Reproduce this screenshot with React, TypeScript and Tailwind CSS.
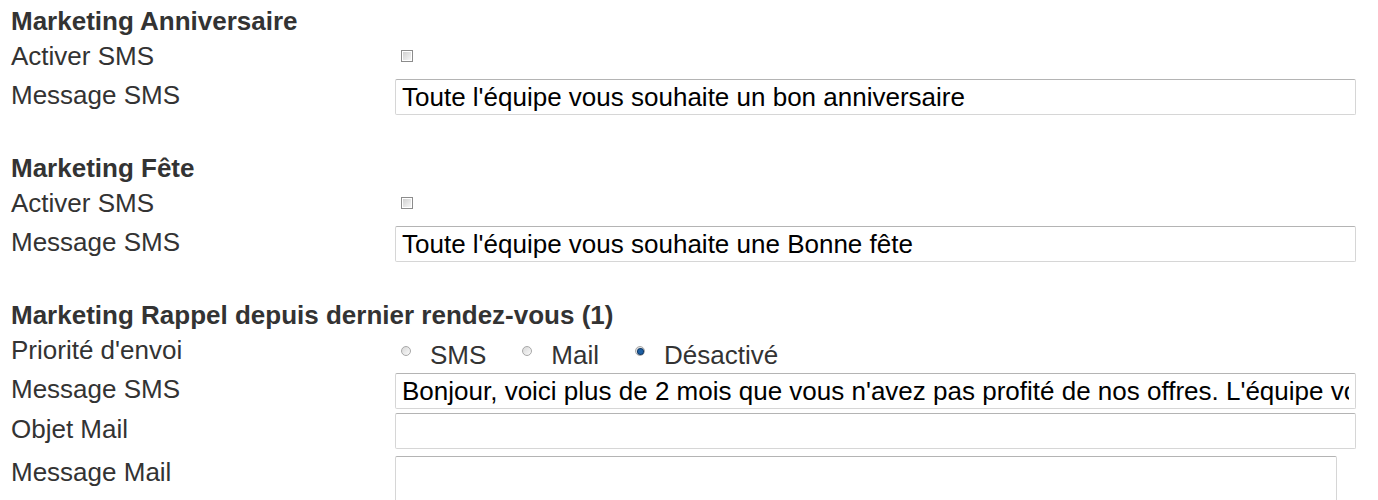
import React from "react";

const labelCls = "w-[384px] shrink-0 leading-[34px]";
const fieldLabelCls = "w-[384px] shrink-0 leading-[32px]";
const inputCls =
  "h-[36px] w-[961px] rounded-[2px] border border-[#d6d6d6] border-t-[#b4b4b4] bg-white px-[6px] text-[26px] text-black outline-none";

const Checkbox = () => (
  <span className="ml-[6px] mt-[11px] block h-[12px] w-[12px] border border-[#8c8c8c] bg-white p-[1px]">
    <span className="block h-full w-full bg-gradient-to-br from-[#d0d0d0] to-[#f6f6f6]" />
  </span>
);

const Radio = ({ checked }: { checked?: boolean }) => (
  <span className="mt-[8px] flex h-[10px] w-[10px] shrink-0 items-center justify-center rounded-full border border-[#a8a8a8] bg-gradient-to-br from-[#d8d8d8] to-[#fafafa]">
    {checked && <span className="block h-[5px] w-[5px] rounded-full bg-[#1d5fa3] ring-1 ring-[#0f3866]" />}
  </span>
);

const Heading = ({ children }: { children: React.ReactNode }) => (
  <div className="pt-[3px] text-[26px] font-bold leading-[36px]">{children}</div>
);

const InputRow = ({ label, value, className = "" }: { label: string; value: string; className?: string }) => (
  <div className={"flex " + className}>
    <div className={fieldLabelCls}>{label}</div>
    <input readOnly className={inputCls} defaultValue={value} />
  </div>
);

const BirthdaySection = ({ title, message }: { title: string; message: string }) => (
  <div className="mb-[32px]">
    <Heading>{title}</Heading>
    <div className="flex">
      <div className={labelCls}>Activer SMS</div>
      <Checkbox />
    </div>
    <InputRow label="Message SMS" value={message} className="mt-[6px]" />
  </div>
);

export default function App() {
  const options = [
    { id: "sms", label: "SMS" },
    { id: "mail", label: "Mail" },
    { id: "off", label: "Désactivé", checked: true },
  ];

  return (
    <div className="h-[500px] overflow-hidden bg-white pl-[11px] text-[26px] text-[#333] [font-family:'Liberation_Sans',Arial,sans-serif]">
      <BirthdaySection title="Marketing Anniversaire" message="Toute l'équipe vous souhaite un bon anniversaire" />
      <BirthdaySection title="Marketing Fête" message="Toute l'équipe vous souhaite une Bonne fête" />

      <div>
        <Heading>Marketing Rappel depuis dernier rendez-vous (1)</Heading>
        <div className="flex h-[34px]">
          <div className={labelCls}>Priorité d'envoi</div>
          <div className="ml-[6px] flex items-start pt-[5px] leading-[34px]">
            {options.map((o) => (
              <div key={o.id} className="mr-[36px] flex items-start gap-[19px]">
                <Radio checked={o.checked} />
                <span>{o.label}</span>
              </div>
            ))}
          </div>
        </div>
        <InputRow
          label="Message SMS"
          value="Bonjour, voici plus de 2 mois que vous n'avez pas profité de nos offres. L'équipe vous attend avec impatience."
          className="mt-[6px]"
        />
        <InputRow label="Objet Mail" value="" className="mt-[4px]" />
        <div className="mt-[7px] flex">
          <div className={fieldLabelCls}>Message Mail</div>
          <textarea
            readOnly
            className="h-[80px] w-[942px] resize-none rounded-[2px] border border-[#d6d6d6] border-t-[#b4b4b4] bg-white outline-none"
          />
        </div>
      </div>
    </div>
  );
}
